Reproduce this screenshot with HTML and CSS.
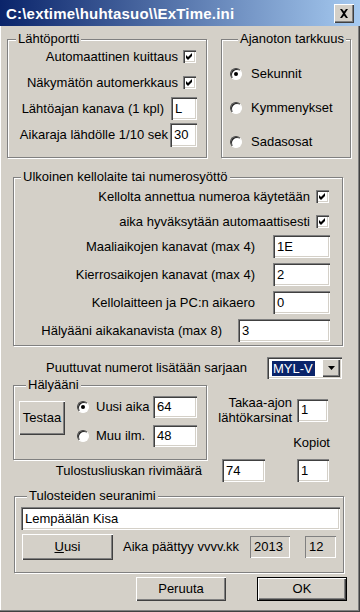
FILE: index.html
```html
<!DOCTYPE html>
<html lang="fi">
<head>
    <meta charset="UTF-8">
    <meta name="viewport" content="width=device-width, initial-scale=1.0">
    <title>ExTime.ini</title>
    <link rel="stylesheet" href="styles.css">
</head>
<body>
    <div class="window">
        <div class="titlebar">
            <span class="title">C:\extime\huhtasuo\\ExTime.ini</span>
            <span class="close-btn">
                <svg width="10" height="9" viewBox="0 0 10 9"><path d="M1 0 H3 L5 2.5 L7 0 H9 L6 4.5 L9 9 H7 L5 6.5 L3 9 H1 L4 4.5 Z" fill="#000"/></svg>
            </span>
        </div>

        <div class="top-row">
            <fieldset class="group group-start">
                <legend>Lähtöportti</legend>
                <div class="row start-r1">
                    <span>Automaattinen kuittaus</span>
                    <span class="check"><svg width="13" height="13" viewBox="0 0 13 13"><path d="M3 5 L5 7 L9 3 L9 6 L5 10 L3 8 Z"/></svg></span>
                </div>
                <div class="row start-r2">
                    <span>Näkymätön automerkkaus</span>
                    <span class="check"><svg width="13" height="13" viewBox="0 0 13 13"><path d="M3 5 L5 7 L9 3 L9 6 L5 10 L3 8 Z"/></svg></span>
                </div>
                <div class="row start-r3">
                    <span>Lähtöajan kanava (1 kpl)</span>
                    <span class="field w26">L</span>
                </div>
                <div class="row start-r4">
                    <span>Aikaraja lähdölle 1/10 sek</span>
                    <span class="field w27">30</span>
                </div>
            </fieldset>

            <fieldset class="group group-precision">
                <legend>Ajanoton tarkkuus</legend>
                <div class="radio-row prec-r1">
                    <span class="radio checked"></span>
                    <span>Sekunnit</span>
                </div>
                <div class="radio-row prec-r2">
                    <span class="radio"></span>
                    <span>Kymmenykset</span>
                </div>
                <div class="radio-row prec-r2">
                    <span class="radio"></span>
                    <span>Sadasosat</span>
                </div>
            </fieldset>
        </div>

        <fieldset class="group group-clock">
            <legend>Ulkoinen kellolaite tai numerosyöttö</legend>
            <div class="row clock-r1">
                <span>Kellolta annettua numeroa käytetään</span>
                <span class="check"><svg width="13" height="13" viewBox="0 0 13 13"><path d="M3 5 L5 7 L9 3 L9 6 L5 10 L3 8 Z"/></svg></span>
            </div>
            <div class="row clock-r2">
                <span>aika hyväksytään automaattisesti</span>
                <span class="check"><svg width="13" height="13" viewBox="0 0 13 13"><path d="M3 5 L5 7 L9 3 L9 6 L5 10 L3 8 Z"/></svg></span>
            </div>
            <div class="row clock-r3">
                <span>Maaliaikojen kanavat (max 4)</span>
                <span class="field w57">1E</span>
            </div>
            <div class="row clock-r4">
                <span>Kierrosaikojen kanavat (max 4)</span>
                <span class="field w57">2</span>
            </div>
            <div class="row clock-r4">
                <span>Kellolaitteen ja PC:n aikaero</span>
                <span class="field w57">0</span>
            </div>
            <div class="row clock-r4 clock-r6">
                <span>Hälyääni aikakanavista (max 8)</span>
                <span class="field w92">3</span>
            </div>
        </fieldset>

        <div class="series-row">
            <span>Puuttuvat numerot lisätään sarjaan</span>
            <span class="combo">
                <span class="combo-value">MYL-V</span>
                <span class="combo-btn">
                    <svg width="7" height="4" viewBox="0 0 7 4"><path d="M0 0 H7 L3.5 4 Z"/></svg>
                </span>
            </span>
        </div>

        <div class="alarm-row">
            <fieldset class="group group-alarm">
                <legend>Hälyääni</legend>
                <div class="alarm-content">
                    <span class="btn btn-test">Testaa</span>
                    <div class="alarm-options">
                        <div class="alarm-option">
                            <span class="radio checked"></span>
                            <span class="alarm-label">Uusi aika</span>
                            <span class="field w44">64</span>
                        </div>
                        <div class="alarm-option alarm-option-2">
                            <span class="radio"></span>
                            <span class="alarm-label">Muu ilm.</span>
                            <span class="field w44">48</span>
                        </div>
                    </div>
                </div>
            </fieldset>
            <div class="side-col">
                <div class="chase-row">
                    <span class="chase-label">Takaa-ajon<br>lähtökarsinat</span>
                    <span class="field w31">1</span>
                </div>
                <div class="copies-label">Kopiot</div>
            </div>
        </div>

        <div class="print-row">
            <span>Tulostusliuskan rivimäärä</span>
            <span class="field w43">74</span>
            <span class="field w32 copies-field">1</span>
        </div>

        <fieldset class="group group-club">
            <legend>Tulosteiden seuranimi</legend>
            <span class="field club-name">Lempäälän Kisa</span>
            <div class="club-bottom">
                <span class="btn btn-new"><u>U</u>usi</span>
                <span class="expire-label">Aika päättyy vvvv.kk</span>
                <span class="field disabled w40">2013</span>
                <span class="field disabled w31 month-field">12</span>
            </div>
        </fieldset>

        <div class="button-row">
            <span class="btn btn-action">Peruuta</span>
            <span class="btn btn-action btn-default">OK</span>
        </div>
    </div>
</body>
</html>
```

FILE: styles.css
```css
* {
    margin: 0;
    padding: 0;
    box-sizing: border-box;
}
body {
    width: 360px;
    height: 612px;
    overflow: hidden;
    background: #d4d0c8;
    color: #000;
    font-family: "Liberation Sans", Arial, sans-serif;
    font-size: 13px;
    line-height: 16px;
}
.window {
    width: 360px;
    height: 612px;
    background: #d4d0c8;
    display: flex;
    flex-direction: column;
    box-shadow: inset -1px -1px #404040, inset -2px -2px #808080, inset 1px 1px #fff;
}

/* title bar */
.titlebar {
    flex: none;
    height: 26px;
    display: flex;
    align-items: center;
    justify-content: space-between;
    padding: 1px 6px 0 6px;
    background: linear-gradient(to right, #0a246a, #a6caf0);
    color: #fff;
}
.title {
    font-weight: bold;
    font-size: 15px;
    letter-spacing: 0.2px;
}
.close-btn {
    width: 20px;
    height: 19px;
    display: flex;
    align-items: center;
    justify-content: center;
    background: #d4d0c8;
    box-shadow: inset 1px 1px #fff, inset -1px -1px #404040, inset -2px -2px #808080;
}

/* 3d bits */
.group {
    border: 1px solid #808080;
    box-shadow: inset 1px 1px #fff, 1px 1px #fff;
}
.group legend {
    margin-left: 8px;
    padding: 0 2px;
    line-height: 14px;
    background: #d4d0c8;
}
.field {
    height: 23px;
    display: flex;
    align-items: center;
    padding: 0 4px;
    background: #fff;
    box-shadow: inset 1px 1px #808080, inset 2px 2px #404040, inset -1px -1px #fff, inset -2px -2px #d4d0c8;
}
.field.disabled {
    background: #d4d0c8;
    height: 22px;
    box-shadow: inset 1px 1px #808080, inset -1px -1px #fff;
}
.check {
    width: 13px;
    height: 13px;
    background: #fff;
    box-shadow: inset 1px 1px #808080, inset 2px 2px #404040, inset -1px -1px #fff, inset -2px -2px #d4d0c8;
    margin-right: 1px;
}
.check svg {
    display: block;
}
.radio {
    flex: none;
    width: 12px;
    height: 12px;
    border-radius: 50%;
    background: #fff;
    border: 1px solid;
    border-color: #404040 #fff #fff #404040;
    box-shadow: inset 1px 1px #202020;
    display: flex;
    align-items: center;
    justify-content: center;
}
.radio.checked::after {
    content: "";
    width: 4px;
    height: 4px;
    border-radius: 50%;
    background: #000;
}
.btn {
    display: flex;
    align-items: center;
    justify-content: center;
    background: #d4d0c8;
    box-shadow: inset 1px 1px #fff, inset -1px -1px #404040, inset -2px -2px #808080;
}
.w26 { width: 26px; }
.w27 { width: 27px; }
.w31 { width: 31px; }
.w32 { width: 32px; }
.w40 { width: 40px; }
.w43 { width: 43px; }
.w44 { width: 44px; }
.w57 { width: 57px; }
.w92 { width: 92px; }

.row {
    display: flex;
    align-items: center;
    justify-content: flex-end;
    gap: 5px;
}

/* top groups */
.top-row {
    display: flex;
    margin: 6px 0 0 7px;
}
.group-start {
    width: 200px;
    padding: 0 9px 10px 0;
}
.start-r1 { height: 13px; margin-top: 4px; }
.start-r2 { height: 13px; margin-top: 13px; }
.start-r3 { height: 23px; margin-top: 8px; gap: 7px; }
.start-r4 { height: 24px; margin-top: 3px; gap: 2px; }
.start-r4 .field { height: 24px; }

.group-precision {
    width: 130px;
    margin-left: 14px;
    padding-left: 8px;
}
.radio-row {
    display: flex;
    align-items: center;
    gap: 9px;
    height: 13px;
}
.prec-r1 { margin-top: 21px; }
.prec-r2 { margin-top: 21px; }

/* clock group */
.group-clock {
    width: 330px;
    margin: 12px 0 0 13px;
    padding: 0 12px 3px 0;
}
.group-clock legend { margin-left: 7px; }
.clock-r1 { height: 13px; margin-top: 6px; gap: 6px; }
.clock-r2 { height: 13px; margin-top: 12px; gap: 6px; }
.clock-r3 { height: 23px; margin-top: 7px; gap: 18px; }
.clock-r4 { height: 23px; margin-top: 5px; gap: 18px; }
.clock-r6 { gap: 16px; }

/* series combo */
.series-row {
    display: flex;
    align-items: center;
    justify-content: flex-end;
    gap: 20px;
    height: 22px;
    margin-top: 11px;
    padding-right: 18px;
}
.combo {
    width: 75px;
    height: 22px;
    display: flex;
    align-items: center;
    justify-content: space-between;
    padding: 2px 2px 2px 5px;
    background: #fff;
    box-shadow: inset 1px 1px #808080, inset 2px 2px #404040, inset -1px -1px #fff, inset -2px -2px #d4d0c8;
}
.combo-value {
    width: 43px;
    height: 15px;
    line-height: 15px;
    padding-left: 1px;
    background: #0a246a;
    color: #fff;
}
.combo-btn {
    width: 18px;
    height: 18px;
    display: flex;
    align-items: center;
    justify-content: center;
    background: #d4d0c8;
    box-shadow: inset 1px 1px #fff, inset -1px -1px #404040, inset -2px -2px #808080;
}
.combo-btn svg { display: block; }

/* alarm */
.alarm-row {
    display: flex;
    margin: -1px 0 0 13px;
}
.group-alarm {
    width: 194px;
    padding: 0 0 12px 5px;
}
.group-alarm legend { margin-left: 7px; }
.alarm-content {
    display: flex;
    gap: 12px;
}
.btn-test {
    width: 46px;
    height: 34px;
    margin-top: 9px;
}
.alarm-options {
    display: flex;
    flex-direction: column;
    margin-top: 4px;
}
.alarm-option {
    display: flex;
    align-items: center;
    height: 22px;
}
.alarm-option .field { height: 22px; }
.alarm-option-2 { margin-top: 7px; }
.alarm-label {
    width: 64px;
    padding-left: 7px;
}
.side-col {
    flex: 1;
    display: flex;
    flex-direction: column;
    align-items: flex-end;
    padding-right: 30px;
}
.chase-row {
    display: flex;
    align-items: center;
    gap: 5px;
    margin-top: 17px;
    margin-right: 2px;
}
.chase-label {
    text-align: right;
    line-height: 15px;
}
.copies-label {
    margin-top: 10px;
    line-height: 15px;
}

/* print rows */
.print-row {
    display: flex;
    align-items: center;
    justify-content: flex-end;
    height: 23px;
    margin-top: -1px;
    padding-right: 31px;
}
.print-row .field { margin-left: 20px; }
.print-row .copies-field { margin-left: 32px; }

.group-club {
    width: 330px;
    margin: 7px 0 0 14px;
    padding: 0 3px 12px 6px;
}
.group-club legend { margin-left: 6px; }
.club-name {
    margin-top: 4px;
}
.club-bottom {
    display: flex;
    align-items: center;
    margin-top: 4px;
}
.btn-new {
    width: 91px;
    height: 26px;
    margin-left: 1px;
}
.expire-label { margin-left: 10px; }
.club-bottom .w40 { margin-left: 11px; }
.month-field { margin-left: 15px; }

.button-row {
    display: flex;
    justify-content: flex-end;
    gap: 31px;
    margin-top: 4px;
    padding-right: 13px;
}
.btn-action {
    width: 90px;
    height: 24px;
}
.btn-default {
    box-shadow: inset 0 0 0 1px #000, inset 2px 2px #fff, inset -2px -2px #404040, inset -3px -3px #808080;
}
```
